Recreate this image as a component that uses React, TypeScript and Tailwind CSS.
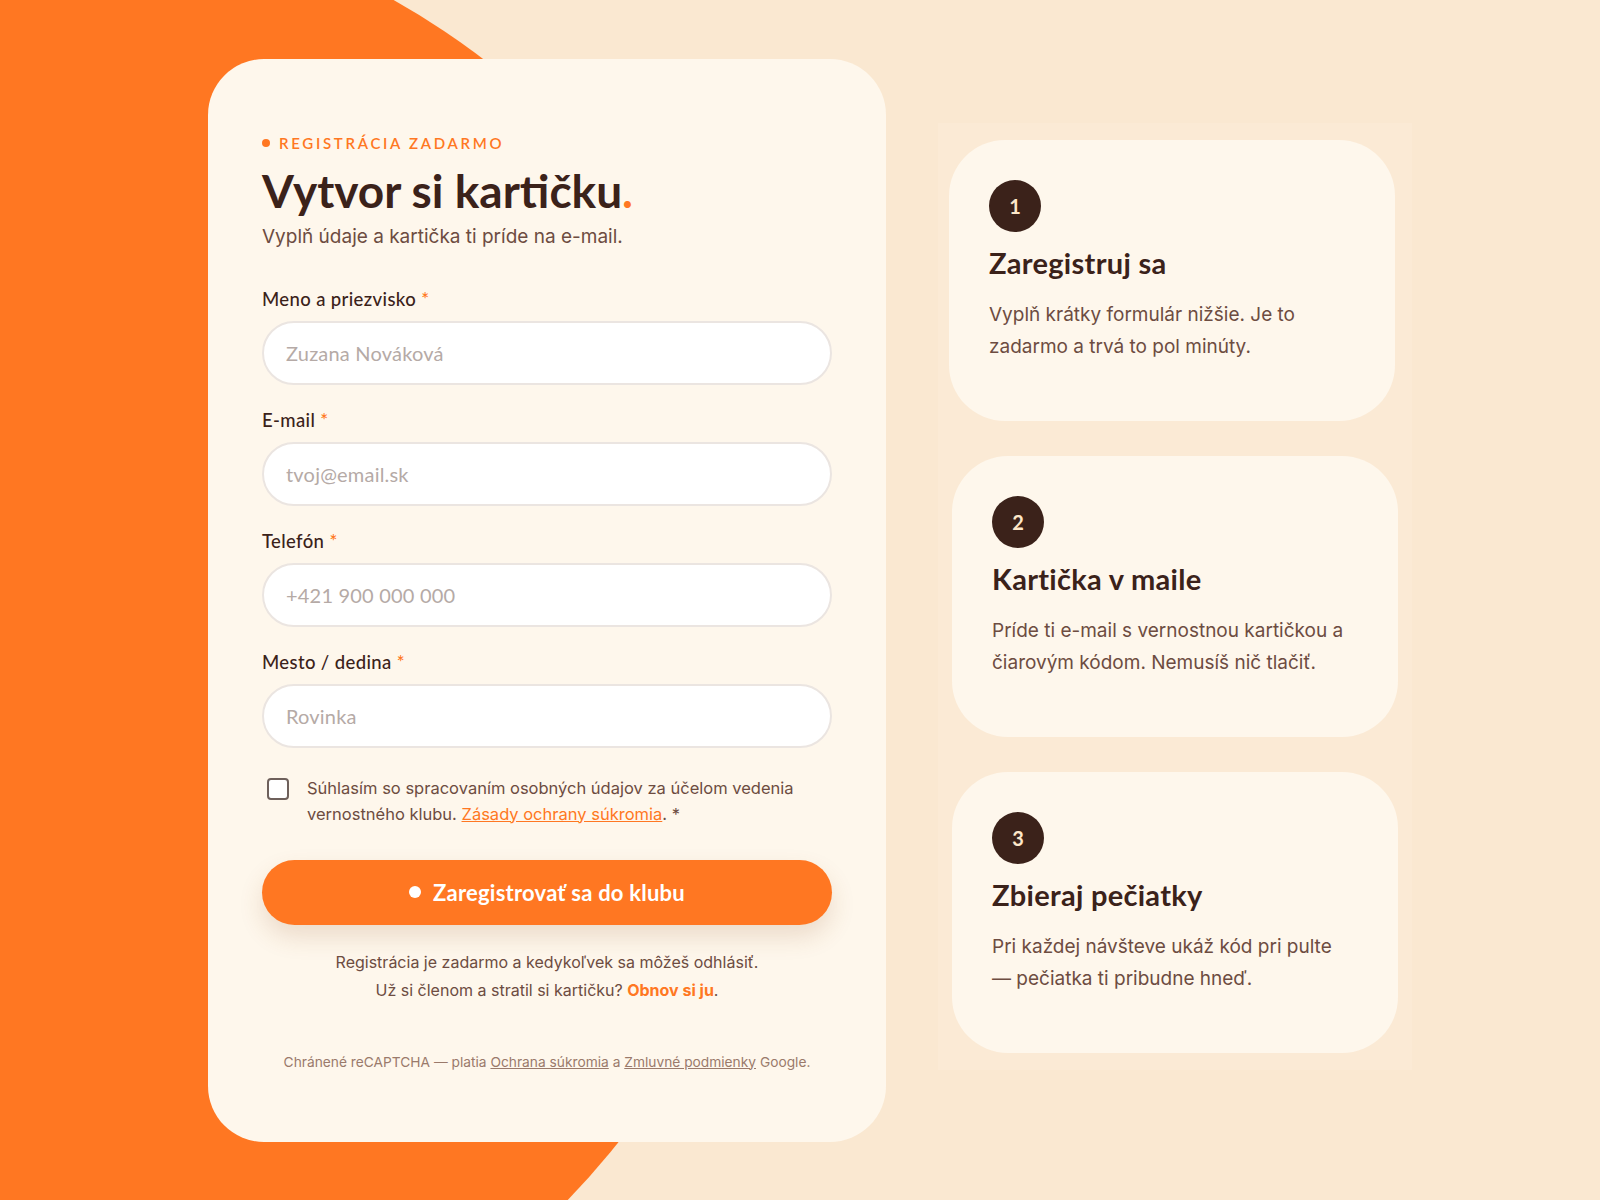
import React from "react";

const heading = { fontFamily: "Lato, 'Noto Sans', sans-serif" };

const fields = [
  { label: "Meno a priezvisko", placeholder: "Zuzana Nováková", type: "text" },
  { label: "E-mail", placeholder: "tvoj@email.sk", type: "email" },
  { label: "Telefón", placeholder: "+421 900 000 000", type: "tel" },
  { label: "Mesto / dedina", placeholder: "Rovinka", type: "text" },
];

const steps = [
  {
    n: "1",
    title: "Zaregistruj sa",
    text: "Vyplň krátky formulár nižšie. Je to zadarmo a trvá to pol minúty.",
    shift: "-translate-x-[3px]",
  },
  {
    n: "2",
    title: "Kartička v maile",
    text: "Príde ti e-mail s vernostnou kartičkou a čiarovým kódom. Nemusíš nič tlačiť.",
    shift: "",
  },
  {
    n: "3",
    title: "Zbieraj pečiatky",
    text: "Pri každej návšteve ukáž kód pri pulte — pečiatka ti pribudne hneď.",
    shift: "",
  },
];

function Field({ label, placeholder, type }: { label: string; placeholder: string; type: string }) {
  return (
    <div className="flex flex-col">
      <label
        className="text-[18.5px] leading-[24px] font-medium tracking-[0.02em] text-[#3b221a]"
        style={heading}
      >
        {label} <span className="text-[#ff7722]">*</span>
      </label>
      <input
        type={type}
        placeholder={placeholder}
        className="mt-[10px] h-[64px] w-full rounded-full border-2 border-[#ebe5e1] bg-white px-[22px] text-[20px] tracking-[0.01em] text-[#3b221a] outline-none placeholder:text-[#b5aaa6]"
        style={heading}
      />
    </div>
  );
}

export default function App() {
  return (
    <div
      className="relative h-[1200px] w-[1600px] overflow-hidden bg-[#fae8d1]"
      style={{ fontFamily: "Inter, 'Noto Sans', sans-serif" }}
    >
      {/* orange blob behind the form */}
      <div className="absolute left-[-746px] top-[-98px] h-[1530px] w-[1530px] rounded-full bg-[#ff7722]" />

      <div className="relative flex h-full items-center pl-[208px]">
        {/* form card */}
        <div className="flex h-[1083px] w-[678px] flex-col rounded-[56px] bg-[#fef7ec] px-[54px] pt-[74px]">
          <div
            className="flex items-center gap-[9px] text-[15px] leading-[20px] font-semibold uppercase tracking-[0.18em] text-[#ff7722]"
            style={heading}
          >
            <span className="h-[8px] w-[8px] rounded-full bg-[#ff7722]" />
            Registrácia zadarmo
          </div>
          <h1 className="mt-[12px] text-[46px] leading-[52px] font-bold text-[#3b221a]" style={heading}>
            Vytvor si kartičku<span className="text-[#ff7722]">.</span>
          </h1>
          <p className="mt-[7px] text-[19px] leading-[26px] text-[#6d4c41]">
            Vyplň údaje a kartička ti príde na e-mail.
          </p>

          <div className="mt-[37px] flex flex-col gap-[23px]">
            {fields.map((f) => (
              <Field key={f.label} {...f} />
            ))}
          </div>

          <div className="mt-[27px] flex items-start gap-[18px]">
            <input
              type="checkbox"
              className="mt-[3px] ml-[5px] h-[22px] w-[22px] shrink-0 appearance-none rounded-[4px] border-2 border-[#6e605b] bg-white"
            />
            <p className="text-[16.5px] leading-[26px] text-[#6d4c41]">
              Súhlasím so spracovaním osobných údajov za účelom vedenia vernostného klubu.{" "}
              <a href="#" className="text-[#ff7722] underline">
                Zásady ochrany súkromia
              </a>
              . *
            </p>
          </div>

          <button
            type="button"
            className="mt-[33px] flex h-[65px] w-full items-center justify-center gap-[12px] rounded-full bg-[#ff7722] text-[22px] font-bold tracking-[0.01em] text-white shadow-[0_12px_24px_rgba(140,80,30,0.16)]"
            style={heading}
          >
            <span className="h-[12px] w-[12px] rounded-full bg-white" />
            Zaregistrovať sa do klubu
          </button>

          <div className="mt-[23px] text-center text-[16px] leading-[28px] text-[#6d4c41]">
            <p>Registrácia je zadarmo a kedykoľvek sa môžeš odhlásiť.</p>
            <p>
              Už si členom a stratil si kartičku?{" "}
              <a href="#" className="font-bold text-[#ff7722]">
                Obnov si ju
              </a>
              .
            </p>
          </div>

          <p className="mt-[48px] text-center text-[13.75px] leading-[20px] text-[#9a7a6b]">
            Chránené reCAPTCHA — platia{" "}
            <a href="#" className="underline">
              Ochrana súkromia
            </a>{" "}
            a{" "}
            <a href="#" className="underline">
              Zmluvné podmienky
            </a>{" "}
            Google.
          </p>
        </div>

        {/* steps */}
        <div className="mb-[8px] ml-[52px] flex w-[474px] flex-col gap-[35px] bg-[#fbead5] px-[14px] py-[17px]">
          {steps.map((s) => (
            <div
              key={s.n}
              className={`flex h-[281px] flex-col rounded-[56px] bg-[#fef7ec] px-[40px] pt-[40px] ${s.shift}`}
            >
              <div
                className="flex h-[52px] w-[52px] items-center justify-center rounded-full bg-[#3b221a] text-[20px] font-bold text-[#fde7c9]"
                style={heading}
              >
                {s.n}
              </div>
              <h3
                className="mt-[17px] text-[29px] leading-[28px] font-bold tracking-[0.01em] text-[#3b221a]"
                style={heading}
              >
                {s.title}
              </h3>
              <p className="mt-[22px] max-w-[352px] text-[19px] leading-[32px] text-[#6d4c41]">{s.text}</p>
            </div>
          ))}
        </div>
      </div>
    </div>
  );
}
